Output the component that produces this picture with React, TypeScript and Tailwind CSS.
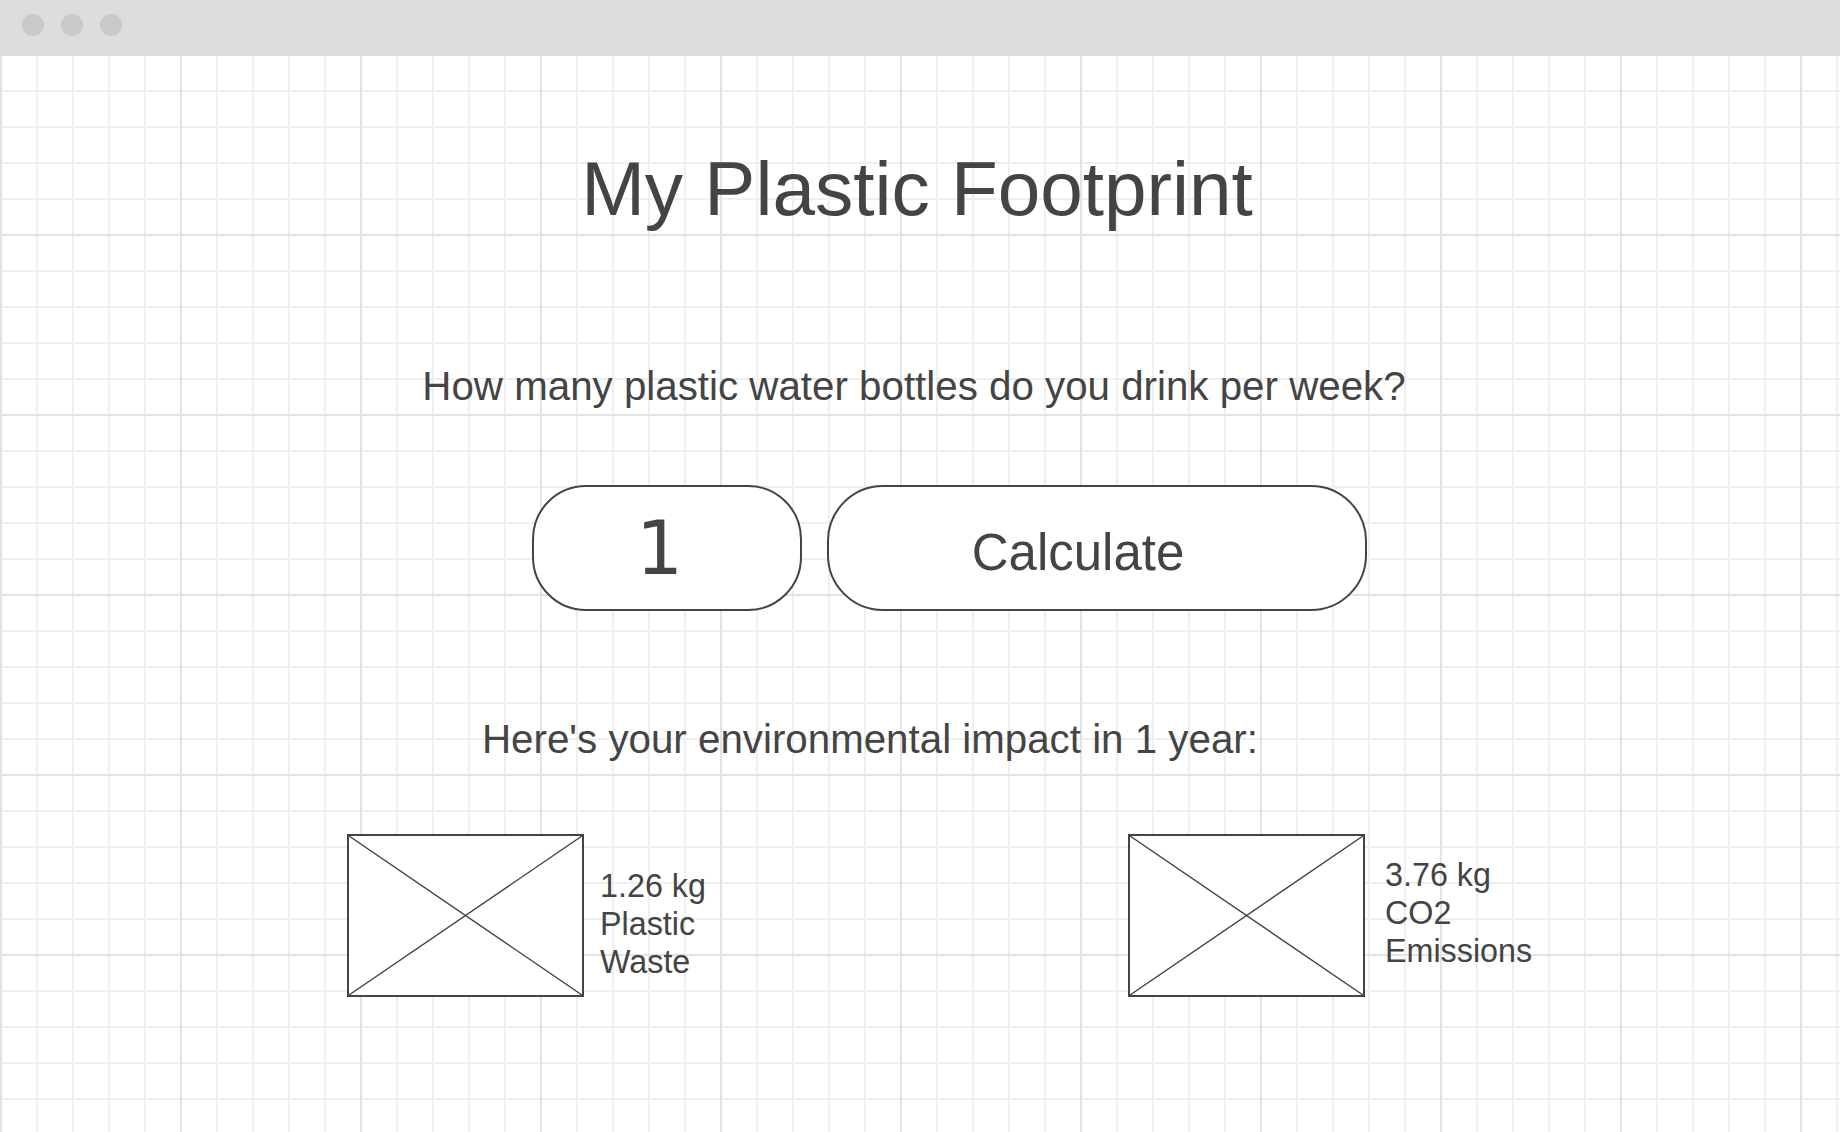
import React from "react";

function Placeholder() {
  return (
    <div className="relative w-[237px] h-[163px] shrink-0 border-2 border-[#444444] bg-white">
      <svg className="absolute inset-0 w-full h-full" viewBox="0 0 100 100" preserveAspectRatio="none">
        <line x1="0" y1="0" x2="100" y2="100" stroke="#444444" strokeWidth="1.4" vectorEffect="non-scaling-stroke" />
        <line x1="100" y1="0" x2="0" y2="100" stroke="#444444" strokeWidth="1.4" vectorEffect="non-scaling-stroke" />
      </svg>
    </div>
  );
}

export default function App() {
  return (
    <div className="w-full h-[1132px] flex flex-col overflow-hidden font-['Liberation_Sans',Arial,sans-serif] text-[#444444]">
      <div className="h-[56px] shrink-0 bg-[#dddddd] flex items-start pt-[14px] pl-[22px] gap-[17px]">
        <div className="w-[22px] h-[22px] rounded-full bg-[#c9c9c9]" />
        <div className="w-[22px] h-[22px] rounded-full bg-[#c9c9c9]" />
        <div className="w-[22px] h-[22px] rounded-full bg-[#c9c9c9]" />
      </div>
      <div className="flex-1 flex flex-col bg-white bg-[linear-gradient(to_right,#e3e3e3_2px,transparent_2px),linear-gradient(to_bottom,transparent_178px,#e3e3e3_178px),linear-gradient(to_right,#efefef_2px,transparent_2px),linear-gradient(to_bottom,transparent_34px,#efefef_34px)] bg-[size:180px_180px,180px_180px,36px_36px,36px_36px]">
        <h1 className="mt-[95px] text-[76.5px] leading-none text-center font-normal pr-[6px]">My Plastic Footprint</h1>
        <p className="mt-[139px] text-[40.3px] leading-none text-center pr-[12px]">
          How many plastic water bottles do you drink per week?
        </p>
        <div className="mt-[78px] flex gap-[25px] pl-[532px]">
          <div className="w-[270px] h-[126px] rounded-[54px] border-2 border-[#444444] bg-white flex items-center justify-center pr-[15px]">
            <span className="text-[74px] leading-none font-['DejaVu_Sans',sans-serif]">1</span>
          </div>
          <div className="w-[540px] h-[126px] rounded-[56px] border-2 border-[#444444] bg-white flex items-center justify-center pr-[38px]">
            <span className="mt-[9px] text-[51px] leading-none">Calculate</span>
          </div>
        </div>
        <p className="mt-[109px] pl-[482px] text-[40.3px] leading-none">Here's your environmental impact in 1 year:</p>
        <div className="mt-[74px] pl-[347px] flex">
          <div className="w-[781px] flex items-start gap-[16px]">
            <Placeholder />
            <div className="mt-[33px] text-[32.3px] leading-[38px]">
              <div>1.26 kg</div>
              <div>Plastic</div>
              <div>Waste</div>
            </div>
          </div>
          <div className="flex items-start gap-[20px]">
            <Placeholder />
            <div className="mt-[22px] text-[32.3px] leading-[38px]">
              <div>3.76 kg</div>
              <div>CO2</div>
              <div>Emissions</div>
            </div>
          </div>
        </div>
      </div>
    </div>
  );
}
